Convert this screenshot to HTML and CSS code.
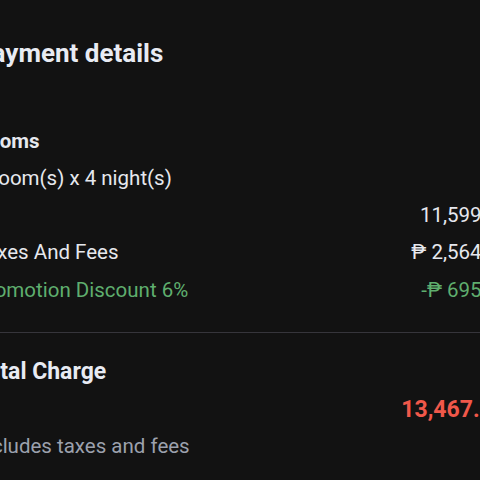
FILE: index.html
```html
<!DOCTYPE html>
<html lang="en">
<head>
<meta charset="utf-8">
<title>Payment details</title>
<link rel="stylesheet" href="styles.css">
</head>
<body>
<main class="panel">
  <h1 class="title">Payment details</h1>
  <section class="group">
    <h2 class="group-title">Rooms</h2>
    <div class="line stay">1 Room(s) x 4 night(s)</div>
    <div class="row"><span class="label"></span><span class="value">11,599.00</span></div>
    <div class="row"><span class="label">Taxes And Fees</span><span class="value">₱ 2,564.28</span></div>
    <div class="row promo"><span class="label">Promotion Discount 6%</span><span class="value">-₱ 695.94</span></div>
  </section>
  <hr class="divider">
  <section class="total">
    <h2 class="total-title">Total Charge</h2>
    <div class="total-amount">13,467.34</div>
    <div class="note">Includes taxes and fees</div>
  </section>
</main>
</body>
</html>
```
FILE: styles.css
```css
html, body {
  margin: 0;
  padding: 0;
  background: #121212;
  overflow: hidden;
}
body {
  font-family: Roboto, "Noto Sans", sans-serif;
  color: #e6e8ee;
  width: 480px;
  height: 480px;
}
.panel {
  margin-left: -25px;
  width: 535px;
  padding-top: 36px;
  display: flex;
  flex-direction: column;
}
.title {
  margin: 0;
  font-size: 26px;
  line-height: 34px;
  font-weight: 700;
  color: #e8ebf3;
}
.group {
  margin-top: 56.6px;
  display: flex;
  flex-direction: column;
  gap: 9.3px;
}
.group-title {
  margin: 0;
  font-size: 20.5px;
  line-height: 28px;
  font-weight: 700;
}
.line, .row, .note {
  font-size: 20.5px;
  line-height: 28px;
}
.stay {
  margin-left: -6px;
}
.row {
  display: flex;
  justify-content: space-between;
}
.promo {
  color: #5fae6e;
}
.divider {
  margin: 28px 0 0;
  border: 0;
  border-top: 1px solid #36353b;
  width: 100%;
}
.total {
  margin-top: 24px;
  display: flex;
  flex-direction: column;
}
.total-title {
  margin: 0;
  font-size: 23px;
  line-height: 30px;
  font-weight: 700;
  color: #e8ebf3;
}
.total-amount {
  margin-top: 8px;
  margin-right: 4px;
  align-self: flex-end;
  font-size: 23px;
  line-height: 30px;
  font-weight: 700;
  color: #f0584a;
}
.note {
  margin-top: 7.6px;
  color: #9ca1ad;
}
```
